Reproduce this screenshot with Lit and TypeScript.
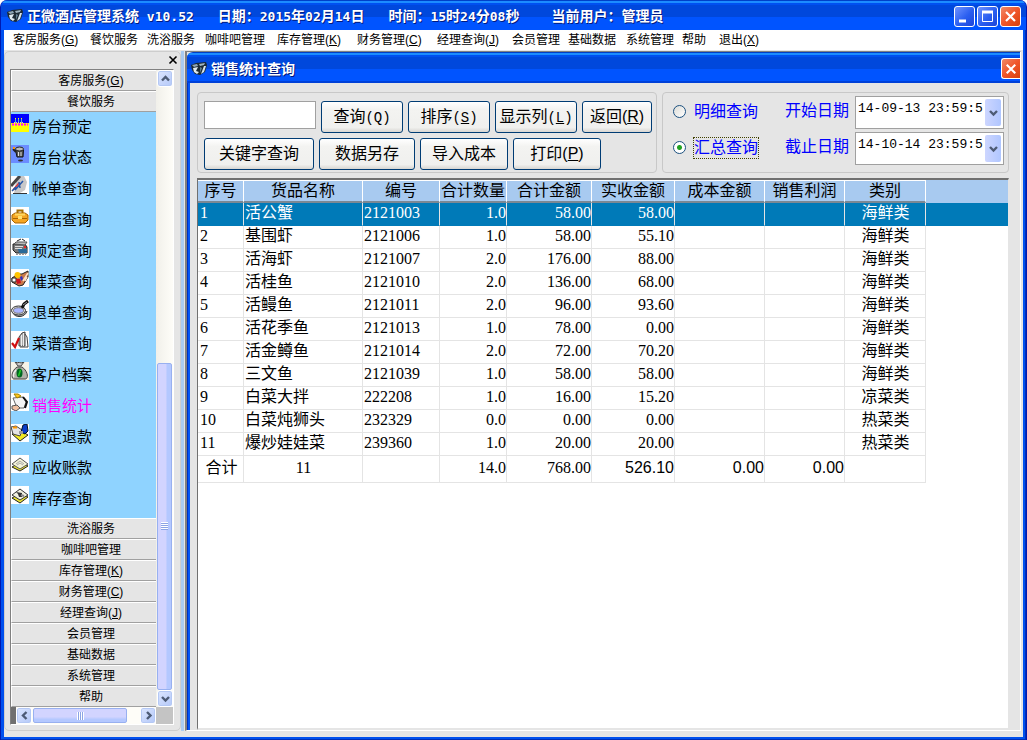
import { LitElement, html, css, svg, nothing } from "lit";
import { customElement, state } from "lit/decorators.js";
import { classMap } from "lit/directives/class-map.js";

interface Entry {
  label: string;
  key?: string;
}

const MENU: Entry[] = [
  { label: "客房服务", key: "G" },
  { label: "餐饮服务" },
  { label: "洗浴服务" },
  { label: "咖啡吧管理" },
  { label: "库存管理", key: "K" },
  { label: "财务管理", key: "C" },
  { label: "经理查询", key: "J" },
  { label: "会员管理" },
  { label: "基础数据" },
  { label: "系统管理" },
  { label: "帮助" },
  { label: "退出", key: "X" },
];

const GROUPS_TOP = MENU.slice(0, 2);
const GROUPS_BOTTOM = MENU.slice(2, 11);

// Small 18x18 pictures of the dining group.
const ITEMS = [
  { label: "房台预定", icon: svg`<rect width="18" height="18" fill="#00f"/><rect y="9" width="18" height="9" fill="#ff0"/><path d="M4.500 5v4M7.500 5v4M10.500 5v4" stroke="#60b0c0"/><path d="M4 4.500h1M7 4.500h1M10 4.500h1" stroke="#ff0"/><path d="M3 8.500h10" stroke="#d8d8a0" stroke-dasharray="1 1"/><path d="M1 10.500h16" stroke="#f0f" stroke-width="2" stroke-dasharray="2 1"/>` },
  { label: "房台状态", icon: svg`<rect width="18" height="18" fill="#6b8cff"/><path d="M4.500 5h8l-.5 7h-6z" fill="#555" stroke="#111"/><ellipse cx="8.500" cy="4" rx="4" ry="2" fill="#bbb" stroke="#222"/><path d="M7.500 7v4M10 7v4" stroke="#ddd"/><path d="M2 4l3 3" stroke="#222" stroke-width="2"/><rect x="2" y="2" width="2" height="2" fill="#f90"/><ellipse cx="9.500" cy="15.500" rx="2.500" ry="1" fill="#333"/>` },
  { label: "帐单查询", icon: svg`<rect width="18" height="18" fill="#fff"/><path d="M6 0h7l3 6-2 8-5 3H3z" fill="#c8c8c8"/><path d="M0 10L9 0" stroke="#444" stroke-width="3"/><path d="M2 14l6-7" stroke="#d33" stroke-width="1.500"/><path d="M4 14l8-9M8 6l1 6M1 15l4-4" stroke="#2456a8" stroke-width="1.500"/><path d="M2 17.500h14" stroke="#333"/>` },
  { label: "日结查询", icon: svg`<rect width="18" height="18" fill="#fff"/><path d="M6.500 6V3.500h5V6" fill="none" stroke="#a87000" stroke-width="2"/><path d="M1 8l3-2h10l3 2v5l-3 3H4l-3-3z" fill="#f5a623" stroke="#a86400"/><path d="M4 7.500h10" stroke="#ffd860" stroke-width="2"/><path d="M2 11.500h14" stroke="#a86400"/><rect x="7" y="9" width="4" height="3" fill="#ffe070"/>` },
  { label: "预定查询", icon: svg`<rect width="18" height="18" fill="#fff"/><path d="M2 6h12l2 3v6H5l-3-3z" fill="#777" stroke="#222"/><path d="M3 6l2-2h11l-2 3z" fill="#bbb" stroke="#555"/><path d="M4 8.500h8M4 10.500h7" stroke="#ddd"/><path d="M7 11h9v4H8z" fill="#2a6a98"/><rect x="13" y="8" width="2" height="2" fill="#e22"/><path d="M6 3l4-2M11 1l3 2" stroke="#222"/><path d="M5 16.500h10" stroke="#999" stroke-dasharray="2 1"/>` },
  { label: "催菜查询", icon: svg`<rect width="18" height="18" fill="#fff"/><path d="M1 9l6-4 4 0 6-3v6l-5 8-4 1-7-4z" fill="#c97a4a" stroke="#222"/><circle cx="6.500" cy="6" r="3" fill="#ffc400"/><path d="M1 9h4v4H1z" fill="#fff" stroke="#222"/><path d="M5 10l4 0 1 4-4 1z" fill="#c91422"/><path d="M9 8l2-1 1 3-2 2z" fill="#3030c0"/><path d="M12 12l5-8M14 12l2-4" stroke="#ffe0c4" stroke-width="1.500"/>` },
  { label: "退单查询", icon: svg`<rect width="18" height="18" fill="#fff"/><path d="M2 13c2 5 12 5 14-2" fill="#aaa" stroke="#333"/><ellipse cx="7.500" cy="10.500" rx="7" ry="4.500" fill="#ddd" stroke="#333"/><ellipse cx="7.500" cy="10.500" rx="5" ry="2.800" fill="#a9b4ff" stroke="#777"/><path d="M11 8l2-4 4-3" stroke="#111" stroke-width="3" fill="none"/><path d="M12 5l4-3" stroke="#999"/>` },
  { label: "菜谱查询", icon: svg`<rect width="18" height="18" fill="#fff"/><path d="M8 6l3-4 3-1v14H8z" fill="#aaa" stroke="#444"/><path d="M10.500 4v11M12.500 2v13" stroke="#eee"/><path d="M14 3l2 3 1 10H9" fill="none" stroke="#444"/><path d="M1 12l3 4 4-9" fill="none" stroke="#d01010" stroke-width="2.200"/>` },
  { label: "客户档案", icon: svg`<rect width="18" height="18" fill="#f6f3e8"/><path d="M4 0l3 4h3l3-4-3 1-2-1-1 1z" fill="#ccc" stroke="#444"/><path d="M6 5C0 9 0 17 3 17h11c4 0 3-8-3-12z" fill="#b0b0a8" stroke="#444"/><path d="M5 8c-3 3-3 6-2 7" stroke="#eee" stroke-width="1.500" fill="none"/><ellipse cx="8.500" cy="11" rx="3" ry="4.500" fill="#062"/><path d="M9.500 8l-2 6" stroke="#2c2" stroke-width="1.500"/>` },
  { label: "销售统计", icon: svg`<rect width="18" height="18" fill="#fff"/><path d="M2 5l10-1 3 5-2 6H6z" fill="#f4f4f4" stroke="#666"/><path d="M12 4l4 5-2 6" fill="none" stroke="#111" stroke-width="2"/><path d="M3 1l3 4 4-2-3-2z" fill="#ffc81e" stroke="#a08000"/><path d="M1 13l5-1 3 3-4 3-4-2z" fill="#f0c0a0" stroke="#555"/>` },
  { label: "预定退款", icon: svg`<rect width="18" height="18" fill="#fff"/><path d="M1 10l8 7 8-6-7-4z" fill="#f0e820" stroke="#222"/><path d="M0 3l5-1 6 4-2 6-7-2z" fill="#e4e4e4" stroke="#444"/><path d="M2 3.500h4" stroke="#f90" stroke-width="2"/><path d="M12 1l4-1 1 7-3 3-4-2z" fill="#0a3cc8" stroke="#012"/><path d="M8 7h4v3H8z" fill="#999"/>` },
  { label: "应收账款", icon: svg`<rect width="18" height="18" fill="#fff"/><path d="M1 12l8 4 8-5-7-4z" fill="#ece636" stroke="#222"/><path d="M1 9l8-6 8 6-8 5z" fill="#f4f4d8" stroke="#555"/><path d="M5 9l4-3 4 3M6 10l3-2 3 2" fill="none" stroke="#aaa"/>` },
  { label: "库存查询", icon: svg`<rect width="18" height="18" fill="#fff"/><path d="M1 12l8 5 8-6-7-4z" fill="#ece636" stroke="#222"/><path d="M1 9l8-6 8 6-8 5z" fill="#f0f0e0" stroke="#333"/><path d="M5 6l6 1v4H8l-1-3z" fill="#333"/><path d="M10 9l3 1" stroke="#888" stroke-width="2"/>` },
];

const COLUMNS = [
  { title: "序号", width: 46 },
  { title: "货品名称", width: 119 },
  { title: "编号", width: 77 },
  { title: "合计数量", width: 67 },
  { title: "合计金额", width: 85 },
  { title: "实收金额", width: 83 },
  { title: "成本金额", width: 90 },
  { title: "销售利润", width: 80 },
  { title: "类别", width: 81 },
];

const ROWS = [
  ["活公蟹", "2121003", "1.0", "58.00", "58.00", "海鲜类"],
  ["基围虾", "2121006", "1.0", "58.00", "55.10", "海鲜类"],
  ["活海虾", "2121007", "2.0", "176.00", "88.00", "海鲜类"],
  ["活桂鱼", "2121010", "2.0", "136.00", "68.00", "海鲜类"],
  ["活鳗鱼", "2121011", "2.0", "96.00", "93.60", "海鲜类"],
  ["活花季鱼", "2121013", "1.0", "78.00", "0.00", "海鲜类"],
  ["活金鳟鱼", "2121014", "2.0", "72.00", "70.20", "海鲜类"],
  ["三文鱼", "2121039", "1.0", "58.00", "58.00", "海鲜类"],
  ["白菜大拌", "222208", "1.0", "16.00", "15.20", "凉菜类"],
  ["白菜炖狮头", "232329", "0.0", "0.00", "0.00", "热菜类"],
  ["爆炒娃娃菜", "239360", "1.0", "20.00", "20.00", "热菜类"],
];

const keyed = (e: Entry) => html`${e.label}${e.key ? html`(<u>${e.key}</u>)` : nothing}`;

const appIcon = html`<svg class="app-icon" viewBox="0 0 16 16" aria-hidden="true">
  <path d="M0 4l5-2 10-1 1 3-2 7-5 3-5-1-3-4z" fill="#1c2a34" />
  <path d="M1 4l5-1 1 2-4 1z" fill="#8fa6b4" />
  <path d="M2 7l5-1-2 4 3 1-2 2-3-2z" fill="#dfeaf0" />
  <path d="M8 3l6-1-1 2-4 1z" fill="#9fb4c0" />
  <path d="M13 5h2l-2 6-3 2z" fill="#d6e4ec" />
  <path d="M9 6l2 1-2 5z" fill="#5f7c8e" />
</svg>`;

const chevron = (d: string) =>
  html`<svg class="chevron" viewBox="0 0 9 9" aria-hidden="true"><path d=${d} fill="none" stroke="#4d5b75" stroke-width="2.400" /></svg>`;
const UP = "M1 6.500L4.500 3L8 6.500";
const DOWN = "M1 3L4.500 6.500L8 3";
const LEFT = "M6.500 1L3 4.500L6.500 8";
const RIGHT = "M3 1L6.500 4.500L3 8";

const cross = html`<svg viewBox="0 0 19 19" aria-hidden="true"><path d="M5 5l9 9M14 5l-9 9" stroke="#fff" stroke-width="2.200" /></svg>`;

@customElement("app-root")
export class AppRoot extends LitElement {
  @state() private selected = 0;
  @state() private active = "销售统计";

  static styles = css`
    :host {
      display: block;
      font-family: "Liberation Sans", "Noto Sans CJK SC", sans-serif;
      font-size: 12px;
      line-height: 16px;
      color: #000;
    }
    * {
      box-sizing: border-box;
    }
    button {
      font: inherit;
      color: inherit;
      border: 0;
      padding: 0;
      margin: 0;
      background: none;
      white-space: nowrap;
    }
    svg {
      display: block;
    }
    .window {
      display: flex;
      flex-direction: column;
      min-height: 100vh;
      padding: 0 3px 3px;
      border: 1px solid #0019b0;
      border-top: 0;
      border-radius: 7px 7px 0 0;
      background: #0050ee;
      box-shadow: inset -1px -1px 0 #0030b8;
    }
    .titlebar {
      display: flex;
      align-items: center;
      height: 30px;
      margin: 0 -3px;
      padding: 2px 5px 0 6px;
      border-radius: 7px 7px 0 0;
      background: linear-gradient(#0040c8 0 1px, #1c8cff 1px 3px, #0050f0 3px 5px, #0048dc 5px 17px, #0054ff 17px);
    }
    .title {
      flex: 1;
      display: flex;
      margin: 0;
      padding-left: 4px;
      font-size: 14px;
      line-height: 20px;
      font-weight: bold;
      color: #fff;
      text-shadow: 1px 1px 0 #001a80;
      white-space: pre;
    }
    .title .num {
      font: bold 13px/20px "DejaVu Sans Mono", monospace;
    }
    .title .part {
      padding-right: 24px;
    }
    .title .part.far {
      padding-right: 32px;
    }
    .app-icon {
      width: 16px;
      height: 16px;
      flex: none;
    }
    .buttons {
      display: flex;
      gap: 2px;
    }
    .win-btn {
      width: 21px;
      height: 21px;
      border: 1px solid #fff;
      border-radius: 3px;
      background: linear-gradient(135deg, #6f93ff, #2a5ef0 55%, #1c44d8);
    }
    .win-btn.close {
      background: linear-gradient(135deg, #f08a68, #f0562a 50%, #d8400c);
    }
    .menu {
      display: grid;
      grid-template-columns: 77px 57px 58px 72px 80px 80px 75px 56px 58px 56px 37px auto;
      justify-content: start;
      height: 20px;
      padding: 0 9px;
      background: #fff;
    }
    .menu button {
      text-align: left;
      line-height: 18px;
    }
    .body {
      flex: 1;
      display: flex;
      padding: 1px 2px 6px 0;
      background: #e5e5e5;
    }
    .dock {
      width: 177px;
      flex: none;
      display: flex;
      flex-direction: column;
      padding: 0 6px 5px 5px;
      border: 1px solid #cdcdcd;
      border-radius: 5px;
    }
    .dock-head {
      display: flex;
      justify-content: flex-end;
      height: 17px;
      padding-top: 3px;
    }
    .dock-close {
      width: 10px;
      height: 10px;
      margin-right: -4px;
    }
    .panel {
      flex: 1;
      display: grid;
      grid-template-columns: 1fr 17px;
      grid-template-rows: 1fr 17px;
      border: 1px solid #808080;
      border-right-color: #fff;
      border-bottom-color: #fff;
    }
    .nav {
      display: flex;
      flex-direction: column;
    }
    .group {
      height: 21px;
      border-top: 1px solid #fff;
      border-left: 1px solid #fff;
      border-bottom: 1px solid #a0a0a0;
      padding-left: 14px;
      line-height: 18px;
      background: #e5e5e5;
    }
    .list {
      flex: 1;
      margin: 0;
      padding: 0 0 3px;
      list-style: none;
      background: #8fd3ff;
    }
    .item {
      display: flex;
      gap: 3px;
      height: 31px;
      width: 100%;
      padding-top: 2px;
      font-size: 15px;
      line-height: 26px;
      text-align: left;
    }
    .item.on {
      color: #f0f;
    }
    .item svg {
      width: 18px;
      height: 18px;
    }
    .vscroll {
      display: flex;
      flex-direction: column;
      padding-left: 1px;
      background: linear-gradient(90deg, #f1f0ea, #fefdf8);
    }
    .hscroll {
      display: flex;
      padding-left: 5px;
      background: linear-gradient(90deg, #707070 5px, #fefdf8 5px);
    }
    .corner {
      background: #c4c4c4;
    }
    .sb {
      display: grid;
      place-items: center;
      flex: none;
      width: 16px;
      height: 17px;
      border: 1px solid #fff;
      border-radius: 3px;
      background: linear-gradient(135deg, #dce6ff, #b4c8f8);
      box-shadow: inset 0 0 0 1px #b4c8f4;
    }
    .chevron {
      width: 9px;
      height: 9px;
    }
    .thumb {
      display: grid;
      place-items: center;
      border: 1px solid #98b0f0;
      border-radius: 2px;
      background: linear-gradient(90deg, #d2d4ff 0 60%, #b4c8ff 70%);
    }
    .vscroll .space {
      flex: 276;
    }
    .vscroll .thumb {
      flex: 326;
      margin-right: 1px;
    }
    .hscroll .thumb {
      flex: 93;
      margin: 1px;
      background: linear-gradient(#d2d4ff 0 60%, #b4c8ff 80%);
    }
    .hscroll .space {
      flex: 12;
    }
    .grip {
      width: 7px;
      height: 8px;
      background: repeating-linear-gradient(#fff 0 1px, #8ca4e4 1px 2px);
    }
    .hscroll .grip {
      background: repeating-linear-gradient(90deg, #fff 0 1px, #8ca4e4 1px 2px);
    }
    .splitter {
      width: 3px;
      flex: none;
      background: #aacbf0;
    }
    .mdi {
      flex: 1;
      min-width: 0;
      display: flex;
      margin-left: 1px;
      border: 1px solid #808080;
      border-right-color: #fff;
      border-bottom-color: #fff;
      border-left-width: 2px;
      overflow: hidden;
    }
    .child {
      flex: 1;
      min-width: 0;
      display: flex;
      flex-direction: column;
      padding-left: 3px;
      background: linear-gradient(90deg, #0030c0 0 1px, #0054f4 1px 3px, #e5e5e5 3px);
      border-radius: 6px 0 0 0;
    }
    .child .titlebar {
      height: 31px;
      margin: 0 0 0 -3px;
      padding: 2px 0 0 4px;
      border-radius: 6px 0 0 0;
      background: linear-gradient(#0040c8 0 1px, #1c8cff 1px 3px, #0050f0 3px 5px, #0048dc 5px 17px, #0054ff 17px 29px, #0040d8 29px);
    }
    .child .win-btn.close {
      width: 19px;
      border-right: 0;
      border-radius: 3px 0 0 3px;
    }
    .content {
      flex: 1;
      display: flex;
      flex-direction: column;
      gap: 5px;
      padding: 9px 11px 0 7px;
      background: #e5e5e5;
    }
    .tools {
      display: flex;
      gap: 5px;
    }
    fieldset {
      min-width: 0;
      margin: 0;
      border: 1px solid #c8c8c8;
      border-radius: 4px;
    }
    .actions {
      width: 460px;
      flex: none;
      display: flex;
      flex-direction: column;
      gap: 5px;
      padding: 8px 3px 0 6px;
    }
    .line {
      display: flex;
      align-items: center;
      gap: 5px;
    }
    .keyword {
      width: 112px;
      height: 28px;
      margin: 0;
      padding: 0 4px;
      font: 16px "Noto Sans CJK SC", sans-serif;
      border: 1px solid #a0a0a0;
      background: #fff;
      align-self: flex-start;
    }
    .btn {
      height: 32px;
      border: 1px solid #003c74;
      border-radius: 3px;
      background: linear-gradient(#fff, #f3f3f1 25%, #f0f0ee 85%, #d8d6d2);
      font-size: 16px;
      line-height: 24px;
    }
    .btn code {
      font: 14px/24px "Liberation Mono", monospace;
    }
    .w70 {
      width: 70px;
    }
    .w82 {
      width: 82px;
    }
    .w88 {
      width: 88px;
    }
    .w96 {
      width: 96px;
    }
    .w110 {
      width: 110px;
    }
    .filters {
      flex: 1;
      display: grid;
      grid-template-columns: 1fr auto auto;
      grid-template-rows: 33px 33px;
      row-gap: 3px;
      column-gap: 6px;
      padding: 3px 4px 6px 10px;
      height: 81px;
      color: #00f;
      font-size: 16px;
    }
    .choice {
      display: flex;
      align-items: center;
      gap: 7px;
      line-height: 20px;
      padding-bottom: 2px;
    }
    .choice span {
      border: 1px solid transparent;
      white-space: nowrap;
    }
    .choice input {
      appearance: none;
      flex: none;
      width: 13px;
      height: 13px;
      margin: 0;
      border: 1px solid #1c5180;
      border-radius: 50%;
      background: linear-gradient(135deg, #dcdcd7, #fff);
    }
    .choice input:checked {
      background: radial-gradient(circle, #21a121 0 2px, #fff 3px);
    }
    .choice input:checked + span {
      border: 1px dotted #404000;
    }
    .date-label {
      line-height: 30px;
      white-space: nowrap;
    }
    .date {
      display: flex;
      width: 149px;
      padding: 1px;
      border: 1px solid #a0a0a0;
      background: #fff;
    }
    .date input {
      flex: 1;
      min-width: 0;
      height: 22px;
      margin: 0;
      padding: 0 0 0 1px;
      border: 0;
      outline: 0;
      background: none;
      font: 13px/22px "Liberation Mono", monospace;
    }
    .date button {
      display: grid;
      place-items: center;
      width: 16px;
      margin: 1px;
      border-radius: 2px;
      background: linear-gradient(90deg, #cdd6ff, #b0c6ff);
    }
    .sheet {
      flex: 1;
      border: 1px solid #707070;
      border-right-color: #e5e5e5;
      border-bottom: 2px solid #e5e5e5;
      border-top-width: 2px;
      background: #fff;
    }
    table {
      width: 100%;
      table-layout: fixed;
      border-collapse: separate;
      border-spacing: 0;
      font: 16px/20px "Liberation Serif", "Noto Sans CJK SC", serif;
    }
    th {
      height: 23px;
      padding: 0;
      border-top: 1px solid #fff;
      border-right: 1px solid #fff;
      border-bottom: 2px solid #7c8894;
      background: #a8caf0;
      font-weight: normal;
      line-height: 18px;
      white-space: nowrap;
    }
    th.rest {
      border: 0;
    }
    td {
      height: 23px;
      padding: 0 0 2px 1px;
      border-right: 1px solid #e4e4e4;
      border-bottom: 1px solid #e4e4e4;
      white-space: nowrap;
    }
    td:first-child {
      padding-left: 2px;
    }
    td.r {
      text-align: right;
    }
    td.c {
      text-align: center;
    }
    td.rest {
      border: 0;
    }
    tr.sel td {
      color: #fff;
      background: #007ab8;
      border-bottom-color: #007ab8;
    }
    tfoot td {
      height: 27px;
    }
    td.sans {
      font-family: "Liberation Sans", sans-serif;
    }
  `;

  render() {
    return html`
      <div class="window">
        <header class="titlebar">
          ${appIcon}
          <h1 class="title"><span class="part">正微酒店管理系统<span class="num"> v10.52</span></span><span class="part">日期：<span class="num">2015</span>年<span class="num">02</span>月<span class="num">14</span>日</span><span class="part far">时间：<span class="num">15</span>时<span class="num">24</span>分<span class="num">08</span>秒</span><span>当前用户：管理员</span></h1>
          <div class="buttons">
            <button class="win-btn" aria-label="最小化"><svg viewBox="0 0 19 19"><path d="M4 14h7" stroke="#fff" stroke-width="3" /></svg></button>
            <button class="win-btn" aria-label="最大化"><svg viewBox="0 0 19 19"><path d="M4.500 5v9.500h10V5" fill="none" stroke="#fff" /><path d="M4 5h11" stroke="#fff" stroke-width="3" /></svg></button>
            <button class="win-btn close" aria-label="关闭">${cross}</button>
          </div>
        </header>
        <nav class="menu">${MENU.map((m) => html`<button>${keyed(m)}</button>`)}</nav>
        <div class="body">
          ${this.renderDock()}
          <div class="splitter"></div>
          <main class="mdi">
            <section class="child">
              <header class="titlebar">
                ${appIcon}
                <h2 class="title">销售统计查询</h2>
                <button class="win-btn close" aria-label="关闭">${cross}</button>
              </header>
              <div class="content">${this.renderTools()} ${this.renderTable()}</div>
            </section>
          </main>
        </div>
      </div>
    `;
  }

  private renderDock() {
    const group = (g: Entry) => html`<button class="group">${keyed(g)}</button>`;
    return html`
      <aside class="dock">
        <div class="dock-head">
          <button class="dock-close" aria-label="关闭"><svg viewBox="0 0 10 10"><path d="M1.500 1.500l7 7M8.500 1.500l-7 7" stroke="#000" stroke-width="1.600" /></svg></button>
        </div>
        <div class="panel">
          <div class="nav">
            ${GROUPS_TOP.map(group)}
            <ul class="list">
              ${ITEMS.map(
                (i) => html`<li>
                  <button class=${classMap({ item: true, on: this.active === i.label })} @click=${() => (this.active = i.label)}>
                    <svg viewBox="0 0 18 18" aria-hidden="true">${i.icon}</svg>${i.label}
                  </button>
                </li>`
              )}
            </ul>
            ${GROUPS_BOTTOM.map(group)}
          </div>
          <div class="vscroll">
            <button class="sb" aria-label="向上">${chevron(UP)}</button>
            <div class="space"></div>
            <div class="thumb"><div class="grip"></div></div>
            <button class="sb" aria-label="向下">${chevron(DOWN)}</button>
          </div>
          <div class="hscroll">
            <button class="sb" aria-label="向左">${chevron(LEFT)}</button>
            <div class="thumb"><div class="grip"></div></div>
            <div class="space"></div>
            <button class="sb" aria-label="向右">${chevron(RIGHT)}</button>
          </div>
          <div class="corner"></div>
        </div>
      </aside>
    `;
  }

  private renderTools() {
    return html`
      <div class="tools">
        <fieldset class="actions">
          <div class="line">
            <input class="keyword" type="text" aria-label="关键字" />
            <button class="btn w82">查询<code>(Q)</code></button>
            <button class="btn w82">排序<code>(<u>S</u>)</code></button>
            <button class="btn w82">显示列<code>(<u>L</u>)</code></button>
            <button class="btn w70">返回(<u>R</u>)</button>
          </div>
          <div class="line">
            <button class="btn w110">关键字查询</button>
            <button class="btn w96">数据另存</button>
            <button class="btn w88">导入成本</button>
            <button class="btn w88">打印(<u>P</u>)</button>
          </div>
        </fieldset>
        <fieldset class="filters">
          <label class="choice"><input type="radio" name="mode" /><span>明细查询</span></label>
          <label class="date-label" for="from">开始日期</label>
          <div class="date">
            <input id="from" type="text" value="14-09-13 23:59:5" /><button aria-label="选择开始日期">${chevron(DOWN)}</button>
          </div>
          <label class="choice"><input type="radio" name="mode" checked /><span>汇总查询</span></label>
          <label class="date-label" for="to">截止日期</label>
          <div class="date">
            <input id="to" type="text" value="14-10-14 23:59:5" /><button aria-label="选择截止日期">${chevron(DOWN)}</button>
          </div>
        </fieldset>
      </div>
    `;
  }

  private renderTable() {
    return html`
      <div class="sheet">
        <table>
          <colgroup>
            ${COLUMNS.map((c) => html`<col style="width:${c.width}px" />`)}
            <col />
          </colgroup>
          <thead>
            <tr>
              ${COLUMNS.map((c) => html`<th>${c.title}</th>`)}
              <th class="rest"></th>
            </tr>
          </thead>
          <tbody>
            ${ROWS.map(
              (r, i) => html`<tr class=${classMap({ sel: i === this.selected })} @click=${() => (this.selected = i)}>
                <td>${i + 1}</td>
                <td>${r[0]}</td>
                <td>${r[1]}</td>
                <td class="r">${r[2]}</td>
                <td class="r">${r[3]}</td>
                <td class="r">${r[4]}</td>
                <td></td>
                <td></td>
                <td class="c">${r[5]}</td>
                <td class="rest"></td>
              </tr>`
            )}
          </tbody>
          <tfoot>
            <tr>
              <td class="c">合计</td>
              <td class="c">11</td>
              <td></td>
              <td class="r">14.0</td>
              <td class="r">768.00</td>
              <td class="r sans">526.10</td>
              <td class="r sans">0.00</td>
              <td class="r sans">0.00</td>
              <td></td>
              <td class="rest"></td>
            </tr>
          </tfoot>
        </table>
      </div>
    `;
  }
}
